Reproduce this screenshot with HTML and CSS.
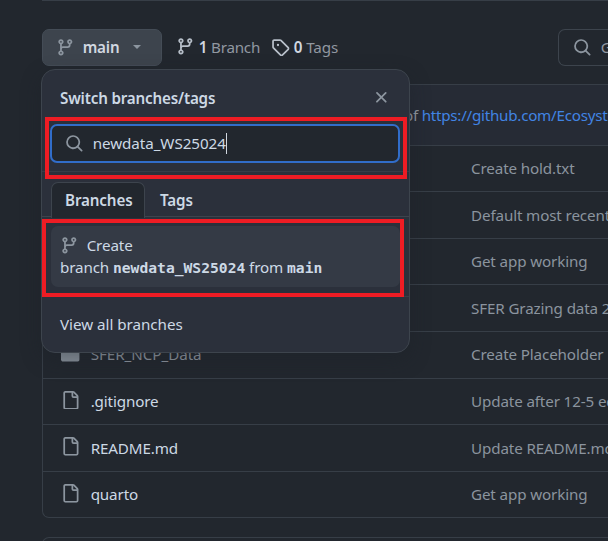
FILE: index.html
```html
<!DOCTYPE html>
<html lang="en">
<head>
<meta charset="utf-8">
<title>Repository files</title>
<link rel="stylesheet" href="styles.css">
</head>
<body>
<svg class="defs" aria-hidden="true">
  <symbol id="branch" viewBox="0 0 16 16"><path d="M9.5 3.25a2.25 2.25 0 1 1 3 2.122V6A2.5 2.5 0 0 1 10 8.5H6a1 1 0 0 0-1 1v1.128a2.251 2.251 0 1 1-1.5 0V5.372a2.25 2.25 0 1 1 1.5 0v1.836A2.493 2.493 0 0 1 6 7h4a1 1 0 0 0 1-1v-.628A2.25 2.25 0 0 1 9.5 3.25Zm-6 0a.75.75 0 1 0 1.5 0 .75.75 0 0 0-1.5 0Zm8.25-.75a.75.75 0 1 0 0 1.5.75.75 0 0 0 0-1.5ZM4.25 12a.75.75 0 1 0 0 1.5.75.75 0 0 0 0-1.5Z"/></symbol>
  <symbol id="tag" viewBox="0 0 16 16"><path d="M1 7.775V2.75C1 1.784 1.784 1 2.75 1h5.025c.464 0 .91.184 1.238.513l6.25 6.25a1.75 1.75 0 0 1 0 2.474l-5.026 5.026a1.75 1.75 0 0 1-2.474 0l-6.25-6.25A1.752 1.752 0 0 1 1 7.775Zm1.5 0c0 .066.026.13.073.177l6.25 6.25a.25.25 0 0 0 .354 0l5.025-5.025a.25.25 0 0 0 0-.354l-6.25-6.25a.25.25 0 0 0-.177-.073H2.75a.25.25 0 0 0-.25.25ZM6 5a1 1 0 1 1 0 2 1 1 0 0 1 0-2Z"/></symbol>
  <symbol id="search" viewBox="0 0 16 16"><path d="M10.68 11.74a6 6 0 0 1-7.922-8.982 6 6 0 0 1 8.982 7.922l3.04 3.04a.749.749 0 1 1-1.06 1.06ZM11.5 7a4.499 4.499 0 1 0-8.997 0A4.499 4.499 0 0 0 11.5 7Z"/></symbol>
  <symbol id="file" viewBox="0 0 16 16"><path d="M2 1.75C2 .784 2.784 0 3.75 0h6.586c.464 0 .909.184 1.237.513l2.914 2.914c.329.328.513.773.513 1.237v9.586A1.75 1.75 0 0 1 13.25 16h-9.5A1.75 1.75 0 0 1 2 14.25Zm1.75-.25a.25.25 0 0 0-.25.25v12.5c0 .138.112.25.25.25h9.5a.25.25 0 0 0 .25-.25V6h-2.75A1.75 1.75 0 0 1 9 4.25V1.5Zm6.75.062V4.25c0 .138.112.25.25.25h2.688l-.011-.013-2.914-2.914-.013-.011Z"/></symbol>
  <symbol id="folder" viewBox="0 0 16 16"><path d="M1.75 1A1.75 1.75 0 0 0 0 2.75v10.5C0 14.216.784 15 1.75 15h12.5A1.75 1.75 0 0 0 16 13.25v-8.5A1.75 1.75 0 0 0 14.25 3H7.5a.25.25 0 0 1-.2-.1l-.9-1.2C6.07 1.26 5.55 1 5 1H1.75Z"/></symbol>
  <symbol id="close" viewBox="0 0 16 16"><path d="M3.72 3.72a.75.75 0 0 1 1.06 0L8 6.94l3.22-3.22a.75.75 0 1 1 1.06 1.06L9.06 8l3.22 3.22a.75.75 0 1 1-1.06 1.06L8 9.06l-3.22 3.22a.75.75 0 1 1-1.06-1.06L6.94 8 3.72 4.78a.75.75 0 0 1 0-1.06Z"/></symbol>
</svg>
<main class="page">
  <header class="toolbar">
    <button class="branch-button"><svg class="icon"><use href="#branch"/></svg><b>main</b><i class="caret"></i></button>
    <a class="stat branches"><svg class="icon"><use href="#branch"/></svg><b>1</b><span>Branch</span></a>
    <a class="stat tags"><svg class="icon"><use href="#tag"/></svg><b>0</b><span>Tags</span></a>
    <div class="find"><svg class="icon"><use href="#search"/></svg><span>Go to file</span></div>
  </header>
  <section class="files">
    <div class="commit"><span>of <a>https://github.com/Ecosystem</a></span></div>
    <div class="row"><span class="name"></span><span class="message">Create hold.txt</span></div>
    <div class="row"><span class="name"></span><span class="message">Default most recent</span></div>
    <div class="row"><span class="name"></span><span class="message">Get app working</span></div>
    <div class="row"><span class="name"></span><span class="message">SFER Grazing data 2</span></div>
    <div class="row"><span class="name dir"><svg class="icon"><use href="#folder"/></svg>SFER_NCP_Data</span><span class="message">Create Placeholder</span></div>
    <div class="row"><span class="name"><svg class="icon"><use href="#file"/></svg>.gitignore</span><span class="message">Update after 12-5 edits</span></div>
    <div class="row"><span class="name"><svg class="icon"><use href="#file"/></svg>README.md</span><span class="message">Update README.md</span></div>
    <div class="row"><span class="name"><svg class="icon"><use href="#file"/></svg>quarto</span><span class="message">Get app working</span></div>
  </section>
  <section class="readme"></section>
</main>
<aside class="popup">
  <div class="popup-head"><b>Switch branches/tags</b><svg class="icon"><use href="#close"/></svg></div>
  <div class="filter"><svg class="icon"><use href="#search"/></svg><span>newdata_WS25024</span><i class="cursor"></i></div>
  <nav class="tabs"><b class="tab active">Branches</b><b class="tab">Tags</b></nav>
  <div class="results">
    <div class="create">
      <div class="create-top"><svg class="icon"><use href="#branch"/></svg><span>Create</span></div>
      <div class="create-line">branch <code>newdata_WS25024</code> from <code>main</code></div>
    </div>
  </div>
  <div class="all">View all branches</div>
</aside>
<div class="mark mark-filter"></div>
<div class="mark mark-create"></div>
</body>
</html>
```
FILE: styles.css
```css
* { box-sizing: border-box; }
body {
  margin: 0;
  width: 608px;
  height: 541px;
  overflow: hidden;
  position: relative;
  background: #22272e;
  color: #cdd9e5;
  font: 15.2px/22px "Noto Sans", sans-serif;
  letter-spacing: -0.13px;
  white-space: nowrap;
}
b { font-weight: 600; }
.defs { position: absolute; width: 0; height: 0; }
.icon { width: 18.67px; height: 18.67px; fill: #8c959f; flex: none; }
.page { padding-left: 42px; height: 541px; overflow: hidden; }
.toolbar {
  height: 84px;
  padding-top: 10px;
  display: flex;
  align-items: center;
  position: relative;
}
.toolbar::before {
  content: "";
  position: absolute;
  top: 0;
  left: 0;
  right: 0;
  height: 1px;
  background: #373e47;
}
.branch-button {
  width: 120px;
  height: 37px;
  padding: 0 0 0 13px;
  border: 1px solid #444c56;
  border-radius: 7px;
  background: #3d444d;
  color: #d1d7e0;
  font: inherit;
  letter-spacing: -0.15px;
  display: flex;
  align-items: center;
}
.branch-button b { margin-left: 8px; width: 50px; text-align: left; }
.caret { border: 4.5px solid transparent; border-top-color: #8c959f; border-bottom: 0; }
.stat { display: flex; align-items: center; color: #9198a1; }
.stat b { color: #d1d7e0; margin-right: 4px; }
.branches { margin-left: 14px; width: 95px; letter-spacing: -0.25px; }
.branches .icon { margin-right: 4px; margin-top: -2px; fill: #b6bec8; }
.tags .icon { margin-right: 4px; fill: #b6bec8; }
.find {
  margin-left: auto;
  width: 50px;
  height: 37px;
  padding-left: 14px;
  border: 1px solid #3d444d;
  border-right: 0;
  border-radius: 7px 0 0 7px;
  display: flex;
  align-items: center;
  color: #9198a1;
  overflow: hidden;
}
.find .icon { margin-right: 9px; }
.files {
  height: 434px;
  border: 1px solid #373e47;
  border-right: 0;
  border-radius: 7px 0 0 7px;
  overflow: hidden;
}
.commit {
  height: 59.6px;
  padding-left: 361px;
  background: #262b35;
  display: flex;
  align-items: center;
  color: #9198a1;
  letter-spacing: -0.25px;
}
.commit a { color: #4184e4; }
.row { height: 46.63px; padding-bottom: 1px; border-top: 1px solid #373e47; display: flex; align-items: center; }
.name { flex: none; width: 428px; padding-left: 18px; display: flex; align-items: center; gap: 11px; }
.name .icon { margin-top: -2px; }
.dir { color: #9198a1; letter-spacing: -0.05px; }
.message { color: #8b949e; }
.readme { margin-top: 19px; height: 30px; border: 1px solid #373e47; border-right: 0; border-radius: 7px 0 0 0; }
.popup {
  position: absolute;
  left: 41px;
  top: 69px;
  width: 369px;
  height: 284px;
  border: 1px solid #3d444d;
  border-radius: 14px;
  background: #2b303b;
  box-shadow: 0 7px 20px #1c212866;
}
.popup-head { height: 54px; padding: 1px 18px 0 18px; display: flex; align-items: center; justify-content: space-between; letter-spacing: -0.18px; }
.filter {
  height: 39px;
  margin: 0 9px 8px 8px;
  padding-left: 13px;
  border: 2px solid #316dca;
  border-radius: 7px;
  background: #22272e;
  display: flex;
  align-items: center;
}
.filter span { margin: -1px 0 0 9px; letter-spacing: -0.06px; }
.cursor { width: 1px; height: 21px; background: #d1d7e0; }
.tabs { height: 46px; padding: 10px 0 0 9px; border-top: 1px solid #373e47; border-bottom: 1px solid #3d444d; display: flex; }
.tab { height: 35px; padding: 7px 15px; }
.active { width: 94px; height: 36px; padding: 6px 13px; border: 1px solid #3d444d; border-bottom: 0; border-radius: 7px 7px 0 0; background: #22272e; }
.results { height: 80px; padding: 9px 9px 9px 9px; border-bottom: 1px solid #373e47; }
.create { height: 61px; padding: 7px 9px; border-radius: 7px; background: #343a45; }
.create-top { display: flex; align-items: center; height: 23px; gap: 8px; }
.create-top .icon { margin-top: 1px; }
.create-line { height: 23px; line-height: 23px; }
code { font: bold 14.67px "DejaVu Sans Mono", monospace; letter-spacing: 0; }
.all { padding: 16px 18px; letter-spacing: -0.03px; }
.mark { position: absolute; border: 4px solid #ee1c24; }
.mark-filter { left: 45px; top: 117px; width: 362px; height: 62px; }
.mark-create { left: 42px; top: 219px; width: 362px; height: 78px; }
```
